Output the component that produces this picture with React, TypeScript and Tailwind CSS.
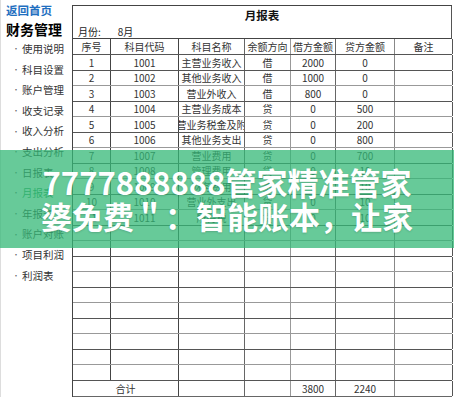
import React from "react";

const font = { fontFamily: '"Noto Sans CJK SC", "Noto Sans", sans-serif' };

const menu = [
  "使用说明",
  "科目设置",
  "账户管理",
  "收支记录",
  "收入分析",
  "支出分析",
  "日报表",
  "月报表",
  "年报表",
  "账户对账",
  "项目利润",
  "利润表",
];

const cols = [
  { w: "w-[38px]", b: "border-[#444]" },
  { w: "w-[68px]", b: "border-[#444]" },
  { w: "w-[66px]", b: "border-[#666]" },
  { w: "w-[46px]", b: "border-[#999]" },
  { w: "w-[45px]", b: "border-[#666]" },
  { w: "w-[59px]", b: "border-[#888]" },
  { w: "w-[58px]", b: "border-[#555]" },
];

const headers = ["序号", "科目代码", "科目名称", "余额方向", "借方金额", "贷方金额", "备注"];

const data: string[][] = [
  ["1", "1001", "主营业务收入", "借", "2000", "0", ""],
  ["2", "1002", "其他业务收入", "借", "1000", "0", ""],
  ["3", "1003", "营业外收入", "借", "800", "0", ""],
  ["4", "1004", "主营业务成本", "贷", "0", "500", ""],
  ["5", "1005", "营业务税金及附", "贷", "0", "200", ""],
  ["6", "1006", "其他业务支出", "贷", "0", "800", ""],
  ["7", "1007", "营业费用", "贷", "0", "700", ""],
  ["8", "1008", "管理费用", "贷", "0", "10", ""],
  ["9", "1009", "财务费用", "贷", "0", "10", ""],
  ["10", "1010", "营业外支出", "贷", "0", "10", ""],
  ["11", "1011", "所得税", "贷", "0", "10", ""],
];

while (data.length < 21) data.push(["", "", "", "", "", "", ""]);

function Row({ cells, i }: { cells: string[]; i: number }) {
  const h = i % 2 === 0 ? "h-[16px]" : "h-[15px]";
  const line = i % 2 === 0 ? "border-[#555]" : "border-[#999]";
  return (
    <div className={`flex ${h} border-b ${line}`}>
      {cells.map((c, j) => (
        <div
          key={j}
          className={`${cols[j].w} shrink-0 border-r ${cols[j].b} flex items-center justify-center overflow-hidden whitespace-nowrap text-[10px] leading-none text-[#333]`}
        >
          {c}
        </div>
      ))}
    </div>
  );
}

export default function App() {
  return (
    <div className="relative h-[400px] w-[454px] overflow-hidden bg-white" style={font}>
      <div className="flex">
        <aside className="w-[72px] shrink-0 border-l border-[#ddd] pl-[5px]">
          <div className="mt-[4px] flex h-[14px] items-center text-[11.5px] font-bold leading-none text-[#1f6fc0]">
            返回首页
          </div>
          <div className="flex h-[21px] items-center text-[14px] font-bold leading-none text-black">
            财务管理
          </div>
          <ul>
            {menu.map((m) => (
              <li
                key={m}
                className={`flex h-[20.6px] items-center gap-[2px] pl-[6px] text-[10.5px] leading-none ${m === "月报表" ? "text-[#1f9a55]" : "text-[#333]"}`}
              >
                <span className="text-[8px] font-light text-[#666]">·</span>
                <span>{m}</span>
              </li>
            ))}
          </ul>
        </aside>

        <section className="mt-[5px] w-[380px] shrink-0 border-l border-t border-[#444]">
          <div className="h-[33px] border-b border-r border-[#555] border-b-[#444]">
            <div className="flex h-[20px] items-center justify-center text-[11.5px] font-bold leading-none text-[#111]">
              月报表
            </div>
            <div className="flex h-[12px] items-center gap-[17px] pl-[5px] text-[10px] leading-none text-[#222]">
              <span>月份:</span>
              <span>8月</span>
            </div>
          </div>
          <Row cells={headers} i={0} />
          {data.map((r, i) => (
            <Row key={i} cells={r} i={i} />
          ))}
          <div className="flex h-[16px] border-b border-[#666]">
            <div className="flex w-[106px] shrink-0 items-center justify-center border-r border-[#444] text-[10px] leading-none text-[#333]">
              合计
            </div>
            <div className="w-[66px] shrink-0 border-r border-[#666]" />
            <div className="w-[46px] shrink-0 border-r border-[#999]" />
            <div className="flex w-[45px] shrink-0 items-center justify-center border-r border-[#666] text-[10px] leading-none text-[#333]">
              3800
            </div>
            <div className="flex w-[59px] shrink-0 items-center justify-center border-r border-[#888] text-[10px] leading-none text-[#333]">
              2240
            </div>
            <div className="w-[58px] shrink-0 border-r border-[#555]" />
          </div>
        </section>
      </div>

      <div className="absolute left-0 right-0 top-[150px] flex h-[98px] flex-col items-center justify-center bg-[#34b877]/75">
        <p className="text-center text-[31px] font-bold leading-[34px] text-white [text-shadow:0_1px_2px_rgba(0,0,0,0.15)]">
          7777888888管家精准管家
          <br />
          婆免费＂：智能账本，让家
        </p>
      </div>
    </div>
  );
}
